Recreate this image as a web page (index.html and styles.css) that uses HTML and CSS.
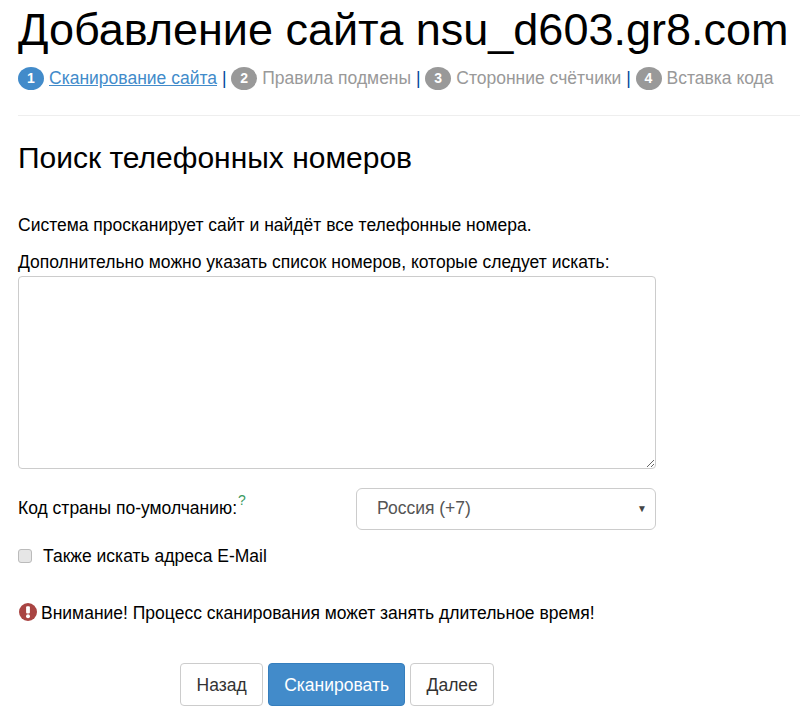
FILE: index.html
```html
<!DOCTYPE html>
<html lang="ru">
<head>
<meta charset="utf-8">
<title>Добавление сайта</title>
<link rel="stylesheet" href="styles.css">
</head>
<body>
<main class="page">
  <h1 class="title">Добавление сайта nsu_d603.gr8.com</h1>
  <nav class="steps">
    <span class="badge badge-active">1</span><a class="step-link" href="#">Сканирование сайта</a><span class="sep">|</span>
    <span class="badge">2</span><span class="step">Правила подмены</span><span class="sep">|</span>
    <span class="badge">3</span><span class="step">Сторонние счётчики</span><span class="sep">|</span>
    <span class="badge">4</span><span class="step">Вставка кода</span>
  </nav>
  <hr class="rule">
  <h2 class="subtitle">Поиск телефонных номеров</h2>
  <p class="intro">Система просканирует сайт и найдёт все телефонные номера.</p>
  <label class="area-label" for="numbers">Дополнительно можно указать список номеров, которые следует искать:</label>
  <textarea class="area" id="numbers"></textarea>
  <div class="country">
    <label class="country-label" for="country">Код страны по-умолчанию:<sup class="hint">?</sup></label>
    <div class="select">
      <span class="select-value" id="country">Россия (+7)</span>
      <span class="select-arrow">▼</span>
    </div>
  </div>
  <label class="check"><input class="check-box" type="checkbox"><span>Также искать адреса E-Mail</span></label>
  <p class="warning">
    <svg class="warn-icon" viewBox="0 0 18 18" width="18" height="18"><circle cx="9" cy="9" r="9" fill="#a94442"/><rect x="7.1" y="3.2" width="3.8" height="7.2" rx="1" fill="#fff"/><circle cx="9" cy="13.2" r="2" fill="#fff"/></svg>
    <span>Внимание! Процесс сканирования может занять длительное время!</span>
  </p>
  <div class="actions">
    <button class="btn" type="button">Назад</button>
    <button class="btn btn-primary" type="button">Сканировать</button>
    <button class="btn" type="button">Далее</button>
  </div>
</main>
</body>
</html>
```
FILE: styles.css
```css
* { box-sizing: border-box; }
html, body { margin: 0; padding: 0; background: #fff; }
body { font-family: "Liberation Sans", Arial, sans-serif; font-size: 17.5px; line-height: 24px; color: #000; overflow: hidden; height: 722px; }
.page { padding: 0 0 0 18px; width: 800px; }
.title { margin: 0; padding-top: 5px; font-size: 45px; line-height: 50px; font-weight: 400; white-space: nowrap; }
.steps { display: flex; align-items: center; height: 24px; margin-top: 11px; white-space: nowrap; color: #999; }
.badge { width: 26px; height: 23px; border-radius: 50%; background: #999; color: #fff; font-size: 14px; font-weight: 700; display: flex; align-items: center; justify-content: center; margin-right: 5px; }
.badge-active { background: #428bca; }
.step-link { color: #428bca; text-decoration: underline; }
.sep { color: #00479d; margin: 0 4.6px 0 5px; }
.rule { border: 0; border-top: 1px solid #eee; margin: 25px 0 0; width: 782px; }
.subtitle { margin: 25px 0 0; font-size: 30px; line-height: 34px; font-weight: 400; }
.intro { margin: 38px 0 0; }
.area-label { display: block; margin-top: 13px; }
.area { display: block; width: 638px; height: 193px; margin-top: 2px; border: 1px solid #ccc; border-radius: 4px; background: #fff; }
.country { display: flex; align-items: center; margin-top: 19px; }
.country-label { width: 338px; position: relative; top: -1px; }
.hint { color: #3c9a5f; font-size: 14px; line-height: 0; margin-left: 1px; vertical-align: 9px; }
.select { display: flex; align-items: center; justify-content: space-between; width: 300px; height: 42px; padding: 0 8px 0 20px; border: 1px solid #ccc; border-radius: 6px; color: #555; }
.select-value { position: relative; top: -1px; }
.select-arrow { font-size: 10px; color: #444; }
.check { display: flex; align-items: center; margin-top: 14px; }
.check-box { appearance: none; width: 14px; height: 14px; margin: 0 11px 0 0; border: 1px solid #bbb; border-radius: 3px; background: #e6e6e6; }
.warning { display: flex; align-items: center; gap: 4px; margin: 33px 0 0 1px; }
.warn-icon { flex: none; margin-top: -2px; }
.actions { display: flex; gap: 5px; margin-top: 38px; padding-left: 162px; }
.btn { height: 43px; padding: 0 15.5px; border: 1px solid #ccc; border-radius: 4px; background: #fff; color: #333; font: inherit; }
.btn-primary { padding: 0 15px; background: #428bca; border-color: #357ebd; color: #fff; }
```
